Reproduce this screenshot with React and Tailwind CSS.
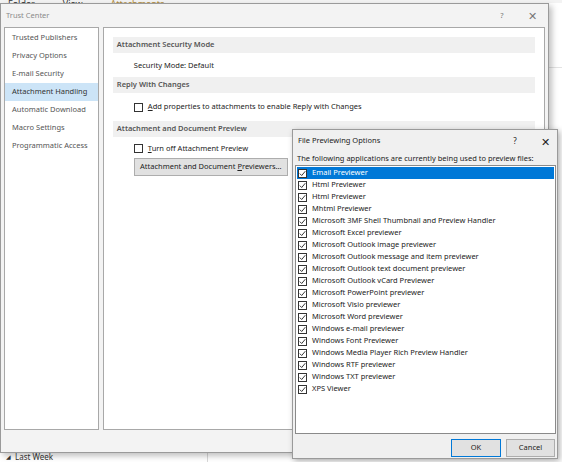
import React from 'react';

const previewers = [
  'Email Previewer',
  'Html Previewer',
  'Html Previewer',
  'Mhtml Previewer',
  'Microsoft 3MF Shell Thumbnail and Preview Handler',
  'Microsoft Excel previewer',
  'Microsoft Outlook image previewer',
  'Microsoft Outlook message and item previewer',
  'Microsoft Outlook text document previewer',
  'Microsoft Outlook vCard Previewer',
  'Microsoft PowerPoint previewer',
  'Microsoft Visio previewer',
  'Microsoft Word previewer',
  'Windows e-mail previewer',
  'Windows Font Previewer',
  'Windows Media Player Rich Preview Handler',
  'Windows RTF previewer',
  'Windows TXT previewer',
  'XPS Viewer',
];

const navItems = [
  'Trusted Publishers',
  'Privacy Options',
  'E-mail Security',
  'Attachment Handling',
  'Automatic Download',
  'Macro Settings',
  'Programmatic Access',
];

function Box({ checked }) {
  return (
    <span className="w-[9px] h-[9px] border border-[#333] bg-white flex items-center justify-center shrink-0">
      {checked && (
        <svg width="7" height="7" viewBox="0 0 7 7">
          <path d="M0.8 3.6 L2.7 5.5 L6.3 1.2" fill="none" stroke="#222" strokeWidth="0.9" />
        </svg>
      )}
    </span>
  );
}

function Section({ title }) {
  return (
    <div className="mx-[9px] h-[16px] bg-[#f0f0f0] flex items-center pl-[4px] font-semibold text-[#555]">
      {title}
    </div>
  );
}

export default function App() {
  return (
    <div className="relative w-[562px] h-[462px] overflow-hidden bg-white font-['Noto_Sans',sans-serif] text-[7.5px] leading-none text-[#333]">
      {/* outlook window behind */}
      <div className="flex flex-col h-full">
        <div className="h-[3px] overflow-hidden bg-[#f3f3f3] flex items-end gap-[28px] pl-[8px]">
          <span className="-mb-[5px] text-[9px]">Folder</span>
          <span className="-mb-[5px] text-[9px]">View</span>
          <span className="-mb-[5px] text-[9px] text-[#b08a3a]">Attachments</span>
        </div>
        <div className="ml-[549px] mt-[64px] border-t border-[#e3e3e3]" />
        <div className="mt-auto h-[10px] flex items-center gap-[4px] pl-[6px] text-[#333]">
          <span className="text-[6px]">◢</span>
          <span className="text-[8px]">Last Week</span>
          <span className="ml-[150px] h-full border-l border-[#d8d8d8]" />
        </div>
      </div>

      {/* Trust Center */}
      <div className="absolute left-0 top-[3px] w-[549px] h-[450px] bg-[#f3f3f3] border border-[#9a9a9a] shadow-[3px_3px_6px_rgba(0,0,0,0.25)] flex flex-col">
        <div className="h-[23px] flex items-center pl-[5px] text-[#8a8a8a]">
          <span>Trust Center</span>
          <span className="ml-auto w-[20px] text-center text-[#777]">?</span>
          <span className="ml-[10px] mr-[6px] w-[20px] text-center text-[11px] text-[#777]">✕</span>
        </div>
        <div className="flex gap-[4px] px-[3px] h-[403px]">
          <div className="w-[95px] bg-white border border-[#a8a8a8] pt-[1px] text-[#555]">
            {navItems.map((n) => (
              <div
                key={n}
                className={`h-[18px] flex items-center pl-[7px] ${n === 'Attachment Handling' ? 'bg-[#cce4f7] text-[#333]' : ''}`}
              >
                {n}
              </div>
            ))}
          </div>
          <div className="w-[443px] bg-white border border-[#a8a8a8] pt-[9px]">
            <Section title="Attachment Security Mode" />
            <div className="h-[24px] flex items-center pl-[30px] pt-[1px] text-[#222]">Security Mode: Default</div>
            <Section title="Reply With Changes" />
            <div className="h-[28px] flex items-center gap-[5px] pl-[30px] text-[#222]">
              <Box />
              <span><u>A</u>dd properties to attachments to enable Reply with Changes</span>
            </div>
            <Section title="Attachment and Document Preview" />
            <div className="mt-[4px] h-[15px] flex items-center gap-[5px] pl-[30px] text-[#222]">
              <Box />
              <span><u>T</u>urn off Attachment Preview</span>
            </div>
            <div className="mt-[2px] ml-[30px] w-[154px] h-[18px] bg-[#e1e1e1] border border-[#adadad] flex items-center justify-center text-[#222]">
              <span>Attachment and Document <u>P</u>reviewers...</span>
            </div>
          </div>
        </div>
      </div>

      {/* File Previewing Options */}
      <div className="absolute left-[292px] top-[129px] w-[266px] h-[330px] bg-[#f0f0f0] border border-[#9a9a9a] shadow-[2px_2px_6px_rgba(0,0,0,0.3)] flex flex-col">
        <div className="h-[22px] flex items-center pl-[5px] text-[#222]">
          <span>File Previewing Options</span>
          <span className="ml-auto w-[12px] text-center text-[8px]">?</span>
          <span className="ml-[18px] mr-[6px] w-[12px] text-center text-[11px]">✕</span>
        </div>
        <div className="h-[13px] flex items-center pl-[4px] text-[#222]">
          The following applications are currently being used to preview files:
        </div>
        <div className="ml-[2px] w-[261px] h-[269px] bg-white border border-[#8a8a8a] p-[1px] text-[#222]">
          {previewers.map((p, i) => (
            <div
              key={i}
              className={`h-[12px] flex items-center gap-[5px] pl-[1px] ${i === 0 ? 'bg-[#0078d7] text-white' : ''}`}
            >
              <Box checked />
              <span>{p}</span>
            </div>
          ))}
        </div>
        <div className="flex justify-end gap-[5px] mt-[5px] mr-[2px]">
          <div className="w-[50px] h-[18px] bg-[#e1e1e1] border border-[#0078d7] flex items-center justify-center text-[#222]">OK</div>
          <div className="w-[49px] h-[18px] bg-[#e1e1e1] border border-[#adadad] flex items-center justify-center text-[#222]">Cancel</div>
        </div>
      </div>
    </div>
  );
}
